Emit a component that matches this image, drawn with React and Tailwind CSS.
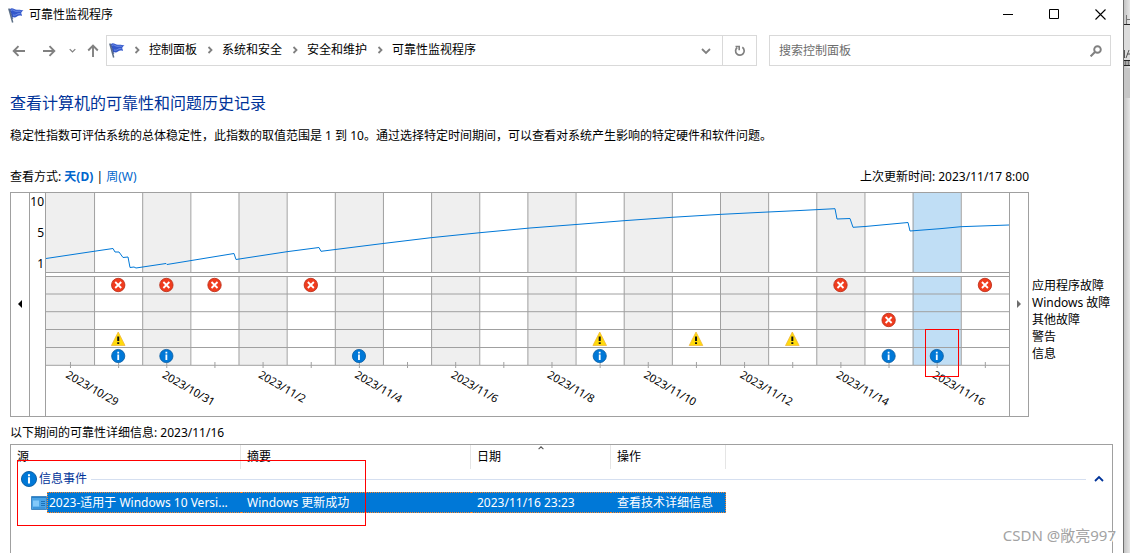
// Reliability Monitor window: title bar, address bar, stability chart, event list

const COL_WIDTH = 48.15;
const PLOT_LEFT = 16;
const PLOT_RIGHT = 979;
const SELECTED_COL = 18;

const dates = [
  "2023/10/29", "2023/10/31", "2023/11/2", "2023/11/4", "2023/11/6",
  "2023/11/8", "2023/11/10", "2023/11/12", "2023/11/14", "2023/11/16",
];

const rowLines = [83.5, 101, 118.7, 136.5, 154.5, 172.3];

const events = [
  { type: "error", y: 92, cols: [1, 2, 3, 5, 16, 19] },
  { type: "error", y: 127, cols: [17] },
  { type: "warning", y: 146, cols: [1, 11, 13, 15] },
  { type: "info", y: 163, cols: [1, 2, 6, 11, 17, 18] },
];

const stability = [
  [16, 65.5], [66, 58], [83, 55.5], [85, 59], [89, 59], [93, 64.5], [98, 64],
  [100, 74.5], [104, 74], [106, 75], [136, 70.5], [137, 71.5], [204, 60.5],
  [206, 66.5], [257, 58.7], [289, 54.5], [291, 58.3], [353, 50.5], [401, 44.7],
  [450, 39.7], [500, 35], [546, 31.5], [594, 27.7], [642, 24.3], [690, 21.4],
  [738, 19], [770, 17.5], [805, 15.7], [807, 26], [820, 25.5], [823, 34.3],
  [835, 33.5], [878, 29.5], [880, 38], [910, 35.7], [931, 33.7], [979, 32],
];

const legend = ["应用程序故障", "Windows 故障", "其他故障", "警告", "信息"];

const crumbs = ["控制面板", "系统和安全", "安全和维护", "可靠性监视程序"];

function FlagIcon() {
  return (
    <svg viewBox="0 0 16 16" className="w-4 h-4 shrink-0" aria-hidden="true">
      <path d="M2 2C4.500 0 6.500 3 9 2.800c2.500-.4 3.500 0 6.500.5-1.500 1-2 1.700-2.300 3 .3 1 .8 1.700.8 2.700-2-.6-3.500-.6-5 .5-1.500 1.200-3 1-4.800.5z" fill="#3358cc" />
      <path d="M3 3.300C5 1.800 6.500 4.800 9 4.300c1.500-.3 2.500-.3 3.800 0M5 8c2 .6 3-.2 4.500-1 1.200-.5 2-.5 3-.3" fill="none" stroke="#7f9bea" strokeWidth=".8" />
      <path d="M.8 1.500 4.700 15.500" stroke="#5c6f86" strokeWidth="1.500" />
      <path d="M1.800 2 4.800 12" stroke="#263f8f" strokeWidth=".7" />
    </svg>
  );
}

function Chevron({ dir = "right", className = "" }) {
  const paths = {
    right: "M3.500 2 6.500 5 3.500 8",
    down: "M1 3 5 7 9 3",
    up: "M1 7 5 3 9 7",
  };
  return (
    <svg viewBox="0 0 10 10" className={`shrink-0 ${className}`} aria-hidden="true">
      <path d={paths[dir]} fill="none" stroke="currentColor" strokeWidth="1.800" />
    </svg>
  );
}

function ArrowIcon({ className = "" }) {
  return (
    <svg viewBox="0 0 14 14" className={`w-3.5 h-3.5 ${className}`} aria-hidden="true">
      <path d="M13 7H2M6.500 2.200 1.700 7l4.800 4.800" fill="none" stroke="currentColor" strokeWidth="1.900" />
    </svg>
  );
}

// Badges are centred on 0,0
function EventIcon({ type }) {
  if (type === "error") {
    return (
      <>
        <circle r="6.700" fill="#f03c1e" stroke="#b92a14" strokeWidth=".8" />
        <path d="M-3-3 3 3M3-3-3 3" stroke="#fff" strokeWidth="1.800" />
      </>
    );
  }
  if (type === "warning") {
    return (
      <>
        <path d="M0-7 6.800 6.500H-6.800z" fill="#ffda0b" stroke="#f2b93b" strokeWidth=".8" strokeLinejoin="round" />
        <path d="M0-2.500V2M0 3.300V5" stroke="#111" strokeWidth="2" />
      </>
    );
  }
  return (
    <>
      <circle r="6.600" fill="#0078d7" stroke="#075a9f" strokeWidth=".8" />
      <path d="M0-4.200v1.700M0-1.500V4" stroke="#fff" strokeWidth="1.800" />
    </>
  );
}

function TitleBar() {
  return (
    <header className="flex items-center h-[29px] pl-2 text-black">
      <FlagIcon />
      <h1 className="ml-[5px] leading-5">可靠性监视程序</h1>
      <div className="flex ml-auto">
        <button aria-label="最小化" className="w-[46px] h-7 flex items-center justify-center">
          <svg viewBox="0 0 11 11" className="w-[11px] h-[11px]"><path d="M0 5.500h10" stroke="#000" /></svg>
        </button>
        <button aria-label="最大化" className="w-[46px] h-7 flex items-center justify-center">
          <svg viewBox="0 0 11 11" className="w-[11px] h-[11px]"><path d="M.5.5h9v9h-9z" fill="none" stroke="#000" /></svg>
        </button>
        <button aria-label="关闭" className="w-[46px] h-7 flex items-center justify-center">
          <svg viewBox="0 0 11 11" className="w-[11px] h-[11px]"><path d="M.5.5l10 10M10.500.5l-10 10" stroke="#000" strokeWidth="1.100" /></svg>
        </button>
      </div>
    </header>
  );
}

function AddressBar() {
  return (
    <div className="flex items-center mt-1.5 pl-2 pr-3 text-[#808080]">
      <button aria-label="后退" className="w-[22px] h-6 flex items-center justify-center mr-2"><ArrowIcon /></button>
      <button aria-label="前进" className="w-[22px] h-6 flex items-center justify-center mr-1"><ArrowIcon className="rotate-180" /></button>
      <button aria-label="最近的位置" className="w-4 h-6 flex items-center justify-center mr-1">
        <Chevron dir="down" className="w-[7px] h-[7px]" />
      </button>
      <button aria-label="上一级" className="w-[18px] h-6 flex items-center justify-center mr-1"><ArrowIcon className="rotate-90" /></button>

      <div className="flex flex-1 h-[31px] border border-[#d9d9d9] mr-3">
        <nav className="flex flex-1 items-center pl-0.5 pb-0.5">
          <FlagIcon />
          {crumbs.map((c) => (
            <span key={c} className="flex items-center">
              <span className="w-6 flex justify-center"><Chevron className="w-2.5 h-2.5" /></span>
              <a href="#" className="text-black whitespace-nowrap leading-5 mr-px">{c}</a>
            </span>
          ))}
        </nav>
        <button aria-label="以前的位置" className="w-8 flex items-center justify-center">
          <Chevron dir="down" className="w-2.5 h-2.5" />
        </button>
        <button aria-label="刷新" className="w-[34px] flex items-center justify-center border-l border-[#d9d9d9]">
          <svg viewBox="0 0 12 12" className="w-3 h-3">
            <path d="M8.300 2.300A4.300 4.300 0 1 1 3.200 2.500" fill="none" stroke="currentColor" strokeWidth="1.700" />
            <path d="M1.500 1.500h3.700v3.700" fill="none" stroke="currentColor" strokeWidth="1.600" />
          </svg>
        </button>
      </div>

      <div className="flex items-center w-[342px] h-[31px] border border-[#d9d9d9]">
        <input
          type="text"
          aria-label="搜索控制面板"
          placeholder="搜索控制面板"
          className="flex-1 min-w-0 h-full pl-[9px] outline-none placeholder:text-[#6d6d6d]"
        />
        <svg viewBox="0 0 12 12" className="w-3 h-3 mr-2" aria-hidden="true">
          <circle cx="7.500" cy="4.500" r="3.300" fill="none" stroke="currentColor" strokeWidth="1.900" />
          <path d="M5 7 .6 11.400" stroke="currentColor" strokeWidth="2" />
        </svg>
      </div>
    </div>
  );
}

function StabilityChart() {
  const center = (i) => PLOT_LEFT + COL_WIDTH * (i + 0.5);
  const columns = [...Array(20).keys()];

  return (
    <svg viewBox="0 0 979 223" className="flex-1 min-w-0 h-auto" role="img" aria-label="稳定性指数">
      {columns.filter((i) => i % 2 === 0).map((i) => (
        <g key={i} fill={i === SELECTED_COL ? "#c0def5" : "#efefef"}>
          <rect x={PLOT_LEFT + i * COL_WIDTH} y="0" width={COL_WIDTH} height="79" />
          <rect x={PLOT_LEFT + i * COL_WIDTH} y="84" width={COL_WIDTH} height="88" />
        </g>
      ))}

      {/* Grid */}
      <g stroke="#a0a0a0">
        {columns.slice(1).map((i) => (
          <path key={i} d={`M${PLOT_LEFT + 0.4 + i * COL_WIDTH} 0V79.500M${PLOT_LEFT + 0.4 + i * COL_WIDTH} 83V172`} />
        ))}
        <path d={`M${PLOT_LEFT} 79.500H${PLOT_RIGHT}`} />
        {rowLines.map((y) => (
          <path key={y} d={`M${PLOT_LEFT} ${y}H${PLOT_RIGHT}`} />
        ))}
        {columns.map((i) => (
          <path key={i} d={`M${center(i) + 0.4} 169V175`} />
        ))}
        <path d="M15.500 0V223" />
      </g>

      <g fontSize="12" textAnchor="end" fill="#000">
        <text x="14" y="13">10</text>
        <text x="14" y="44">5</text>
        <text x="14" y="75">1</text>
      </g>

      <polyline points={stability.map((p) => p.join(",")).join(" ")} fill="none" stroke="#0078d7" strokeWidth="1" />

      {events.map(({ type, y, cols }) =>
        cols.map((c) => (
          <g key={`${type}-${y}-${c}`} transform={`translate(${center(c)} ${y})`}>
            <EventIcon type={type} />
          </g>
        ))
      )}

      {dates.map((d, i) => (
        <text key={d} fontSize="11" fill="#000" transform={`translate(${center(i * 2) - 5} 184) rotate(30)`}>
          {d}
        </text>
      ))}

      <rect x="895.500" y="136.500" width="33" height="47" fill="none" stroke="#f00" />
    </svg>
  );
}

function ChartPanel() {
  return (
    <div className="flex mt-[5px]">
      <div className="flex flex-1 min-w-0 border border-[#a0a0a0]">
        <button aria-label="向前滚动" className="w-[19px] shrink-0 flex items-center justify-center pb-0.5 pr-px border-r border-[#a0a0a0]">
          <svg viewBox="0 0 4 8" className="w-1 h-2"><path d="M4 0v8L0 4z" fill="#000" /></svg>
        </button>
        <StabilityChart />
        <button aria-label="向后滚动" className="w-[19px] shrink-0 flex items-center justify-center pb-0.5 border-l border-[#a0a0a0]">
          <svg viewBox="0 0 4 8" className="w-1 h-2"><path d="M0 0v8l4-4z" fill="#6d6d6d" /></svg>
        </button>
      </div>
      <ul className="w-[94px] shrink-0 pl-[3px] pt-[85px]">
        {legend.map((l) => (
          <li key={l} className="leading-[17px] whitespace-nowrap">{l}</li>
        ))}
      </ul>
    </div>
  );
}

function EventTable() {
  const cell = "h-[21px] flex items-center bg-[#0078d7] text-white border-y border-dotted border-[#ff8728] whitespace-nowrap";
  const head = "relative h-6 p-0 pl-1.5 border-r border-[#e5e5e5] font-normal text-left";

  return (
    <div className="relative flex-1 mt-px mr-2.5 border border-b-0 border-[#a0a0a0]">
      <table className="w-full table-fixed border-separate border-spacing-0 leading-5">
        <colgroup>
          <col className="w-[230px]" />
          <col className="w-[230px]" />
          <col className="w-[140px]" />
          <col className="w-[115px]" />
          <col />
        </colgroup>
        <thead>
          <tr>
            <th className={head}>源</th>
            <th className={head}>摘要</th>
            <th className={head}>
              日期
              <Chevron dir="up" className="absolute left-1/2 top-0 -translate-x-1/2 w-2 h-1.5 text-[#555]" />
            </th>
            <th className={head}>操作</th>
            <th className="p-0" aria-label="空" />
          </tr>
        </thead>
        <tbody>
          <tr>
            <td colSpan={5} className="p-0">
              <div className="flex items-center h-[23px] pb-[3px] pl-2.5 pr-2 text-[#003399]">
                <svg viewBox="-7 -7 14 14" className="w-4 h-4 mr-0.5"><EventIcon type="info" /></svg>
                信息事件
                <span className="flex-1 h-px bg-[#d5dff0] ml-1 mr-2" />
                <button aria-label="折叠"><Chevron dir="up" className="w-2.5 h-2.5" /></button>
              </div>
            </td>
          </tr>
          <tr>
            <td className="p-0">
              <div className="flex pl-5 items-center">
                <svg viewBox="0 0 16 14" className="w-4 h-3.5 shrink-0" aria-hidden="true">
                  <path d="M.5.5h15v13H.5z" fill="#4ca4e6" stroke="#4388c4" />
                  <path d="M1 1.500h14" stroke="#2480ca" />
                  <path d="M2 4.500h6v6H2z" fill="#83c9fa" />
                  <path d="M10 5.500h4M10 7.500h4M10 9.500h4" stroke="#1b70b8" />
                  <path d="M2 12h12" stroke="#2e87d0" />
                </svg>
                <span className={`${cell} flex-1 pl-px border-l`}>2023-适用于 Windows 10 Versi...</span>
              </div>
            </td>
            <td className="p-0"><div className={`${cell} pl-1.5`}>Windows 更新成功</div></td>
            <td className="p-0"><div className={`${cell} pl-1.5`}>2023/11/16 23:23</div></td>
            <td className="p-0">
              <div className={`${cell} pl-1.5 border-r`}><a href="#">查看技术详细信息</a></div>
            </td>
            <td className="p-0" />
          </tr>
        </tbody>
      </table>
      {/* Highlight frame around the selected event */}
      <div className="absolute left-1.5 top-[15px] w-[349px] h-[66px] border border-[#f00] pointer-events-none" />
    </div>
  );
}

// Sliver of the window lying behind this one
function BackgroundWindow() {
  return (
    <div className="w-[7px] shrink-0 border-l border-[#707070] bg-linear-to-r from-[#c4c4c4] to-[#e6e6e6]">
      <svg viewBox="0 0 6 98" className="w-1.5 h-[98px]" aria-hidden="true">
        <path d="M0 25h6v35H0z" fill="#dcdcdc" />
        <path d="M2.500 15v9M3 19.500h3" stroke="#777" />
        <path d="M0 24.500h6" stroke="#222" />
        <path d="M.5 50v8M2 58l3-8M3 54h3" stroke="#555" fill="none" />
        <path d="M0 60.500h6M0 65.500h6" stroke="#222" />
        <path d="M1.500 61v4M4.500 61v4" stroke="#777" strokeWidth="2" />
        <path d="M0 68h6v30H0z" fill="#c6c6c6" />
      </svg>
    </div>
  );
}

export default function App() {
  return (
    <div className="relative flex min-h-screen bg-white text-black text-xs font-['Noto_Sans','Noto_Sans_CJK_SC',sans-serif]">
      <div className="flex flex-col flex-1 min-w-0">
        <TitleBar />
        <AddressBar />
        <main className="flex flex-col flex-1 pl-2.5 pt-[25px]">
          <h2 className="text-base leading-6 text-[#003399]">查看计算机的可靠性和问题历史记录</h2>
          <p className="mt-[11px] leading-5">
            稳定性指数可评估系统的总体稳定性，此指数的取值范围是 1 到 10。通过选择特定时间期间，可以查看对系统产生影响的特定硬件和软件问题。
          </p>
          <div className="flex justify-between mt-[21px] pr-[94px] leading-5">
            <p>
              查看方式: <a href="#" className="font-bold text-[#0066cc]">天(D)</a> | <a href="#" className="text-[#0066cc]">周(W)</a>
            </p>
            <p>上次更新时间: 2023/11/17 8:00</p>
          </div>
          <ChartPanel />
          <h3 className="mt-1.5 leading-5">以下期间的可靠性详细信息: 2023/11/16</h3>
          <EventTable />
        </main>
      </div>
      <BackgroundWindow />
      <span className="absolute right-3.5 bottom-2 text-[15px] leading-5 text-[#a3a3a3] [text-shadow:1px_1px_0_#fff]">
        CSDN @敞亮997
      </span>
    </div>
  );
}
